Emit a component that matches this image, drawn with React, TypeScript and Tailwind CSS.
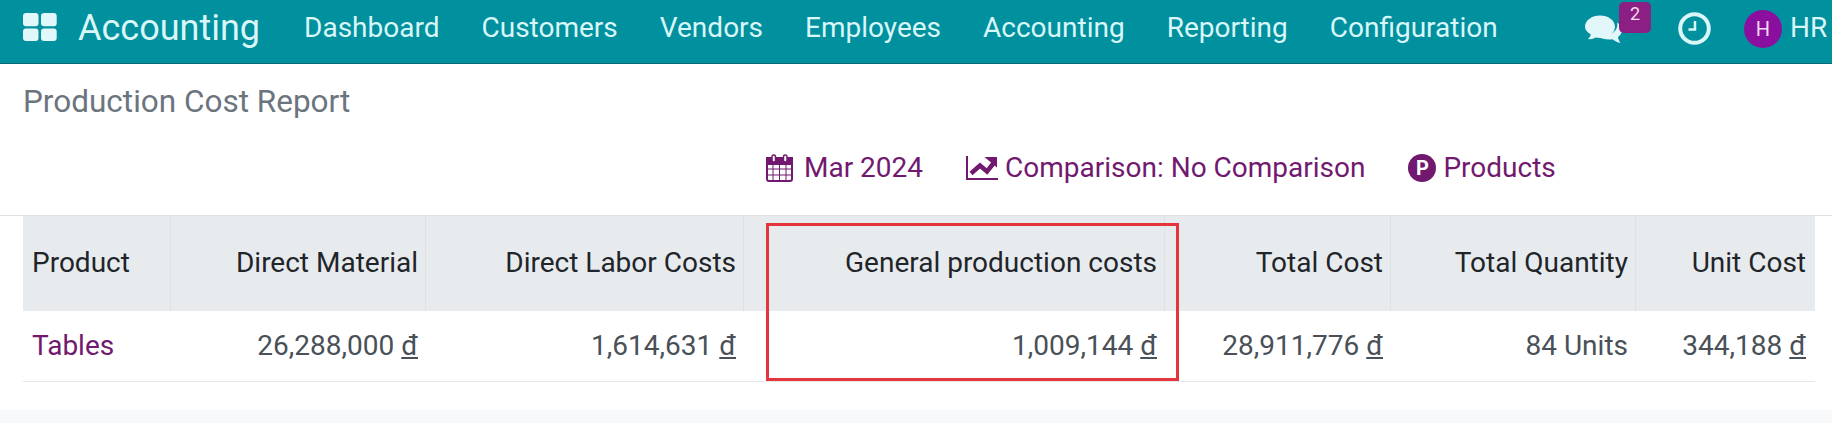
import React from 'react';

const navItems = ['Dashboard', 'Customers', 'Vendors', 'Employees', 'Accounting', 'Reporting', 'Configuration'];

const columns = [
  { label: 'Product', value: 'Tables', width: 'w-[148px]', left: true },
  { label: 'Direct Material', value: '26,288,000', width: 'w-[255px]' },
  { label: 'Direct Labor Costs', value: '1,614,631', width: 'w-[318px]' },
  { label: 'General production costs', value: '1,009,144', width: 'w-[421px]' },
  { label: 'Total Cost', value: '28,911,776', width: 'w-[226px]' },
  { label: 'Total Quantity', value: '84 Units', width: 'w-[245px]', plain: true },
  { label: 'Unit Cost', value: '344,188', width: 'w-[179px]' },
];

const App: React.FC = () => {
  return (
    <div className="relative w-[1832px] h-[423px] overflow-hidden bg-white font-['Roboto',sans-serif]">
      <nav className="h-[64px] pb-[7px] flex items-center bg-[#01909e] border-b border-[#016a74] text-[#d9f6f8]">
        <svg className="w-[34px] h-[28px] ml-[23px] mb-[2px] text-[#e2f7f9]" viewBox="0 0 34 28" fill="currentColor">
          <rect x="0" y="0" width="15.500" height="13.200" rx="3" />
          <rect x="18" y="0" width="15.700" height="13.200" rx="3" />
          <rect x="0" y="15.500" width="15.500" height="12.500" rx="3" />
          <rect x="18" y="15.500" width="15.700" height="12.500" rx="3" />
        </svg>
        <span className="ml-[21px] text-[36px] leading-none">Accounting</span>
        <div className="ml-[44px] flex gap-[42px] text-[28px] leading-none">
          {navItems.map(item => <span key={item}>{item}</span>)}
        </div>
        <div className="ml-auto flex items-center">
          <div className="relative w-[37px] h-[28px] mt-[2px] text-[#e2f7f9]">
            <svg className="w-[37px] h-[28px]" viewBox="0 0 37 28" fill="currentColor">
              <path d="M15 0.500c8 0 15 4.800 15 11.300s-7 11.300-15 11.300c-1.600 0-3.200-.2-4.600-.5C8.500 24 5.500 24.500 3 24c1.500-1.300 2.500-3 2.800-4.500C2.300 17.300 0 14.800 0 11.800 0 5.300 7 .5 15 .5z" />
              <path d="M32 7.500c3 2 5 4.600 5 7.500 0 3-1.500 5.300-4 7 .3 2 1 4 2.500 6-3-.6-6-2-8-3.800-5 1-10.500-.2-14-2.400 9.500.6 21-5.300 18.500-14.300z" />
            </svg>
            <span className="absolute left-[34px] -top-[13px] w-[32px] h-[31px] rounded-[5px] bg-[#8c1f84] text-[#f6d9f2] text-[18px] leading-[24px] text-center">2</span>
          </div>
          <svg className="ml-[56px] w-[33px] h-[33px]" viewBox="0 0 33 33" fill="none" stroke="currentColor">
            <circle cx="16.500" cy="16.500" r="14.300" strokeWidth="4" />
            <path d="M17 9v8.500H10.500" strokeWidth="2.500" />
          </svg>
          <span className="ml-[33px] mt-[2px] w-[38px] h-[38px] rounded-full bg-[#8a0f9e] text-[#f3d9f5] text-[20px] flex items-center justify-center">H</span>
          <span className="ml-[8px] w-[42px] text-[28px] leading-none">HR</span>
        </div>
      </nav>

      <div className="pl-[23px] pt-[19px] text-[31.500px] leading-[38px] text-[#6c757d]">Production Cost Report</div>

      <div className="mt-[30px] pl-[766px] flex items-center h-[34px] text-[28px] leading-none text-[#71196f]">
        <svg className="w-[27px] h-[28px]" viewBox="0 0 27 28" fill="none" stroke="currentColor">
          <rect x="1" y="4" width="25" height="23" rx="2" strokeWidth="2" />
          <rect x="1" y="4" width="25" height="6" fill="currentColor" strokeWidth="2" />
          <rect x="6" y="1" width="3.500" height="7" rx="1.700" fill="#fff" strokeWidth="1.500" />
          <rect x="17.500" y="1" width="3.500" height="7" rx="1.700" fill="#fff" strokeWidth="1.500" />
          <path d="M7 10v16M13.500 10v16M20 10v16M1 15h25M1 21h25" strokeWidth="1" />
        </svg>
        <span className="ml-[11px]">Mar 2024</span>
        <svg className="ml-[43px] w-[32px] h-[24px]" viewBox="0 0 32 24" fill="currentColor">
          <path d="M0 0h2v22h30v2H0z" />
          <path d="M5 17.500l9-8 7 6 7.500-9.500" fill="none" stroke="currentColor" strokeWidth="4.500" />
          <path d="M18.500 1h12.500v10.500z" />
        </svg>
        <span className="ml-[7px]">Comparison: No Comparison</span>
        <span className="ml-[43px] w-[28px] h-[28px] rounded-full bg-[#71196f] text-white text-[20px] font-bold flex items-center justify-center">P</span>
        <span className="ml-[7px]">Products</span>
      </div>

      <div className="mt-[30px] border-t border-[#dee2e6]">
        <div className="ml-[23px] w-[1792px] h-[95px] flex bg-[#e8ebee] text-[28px] text-[#212529]">
          {columns.map(col => (
            <div key={col.label} className={`${col.width} ${col.left ? 'pl-[9px] justify-start' : 'pr-[7px] last:pr-[9px] justify-end'} pb-[2px] flex items-center border-r border-[#dee2e6] last:border-r-0`}>
              {col.label}
            </div>
          ))}
        </div>
        <div className="ml-[23px] w-[1792px] h-[71px] flex border-b border-[#e5e7ea] text-[28px] text-[#495057]">
          {columns.map(col => (
            <div key={col.label} className={`${col.width} ${col.left ? 'pl-[9px] justify-start text-[#71196f]' : 'pr-[8px] last:pr-[9px] justify-end'} flex items-center gap-[7px]`}>
              <span>{col.value}</span>
              {!col.left && !col.plain && <span className="underline">đ</span>}
            </div>
          ))}
        </div>
      </div>

      <div className="mt-[28px] h-[13px] bg-[#f8f9fa]" />

      <div className="absolute left-[766px] top-[223px] w-[413px] h-[158px] border-[3px] border-[#e5343b]" />
    </div>
  );
};

export default App;
